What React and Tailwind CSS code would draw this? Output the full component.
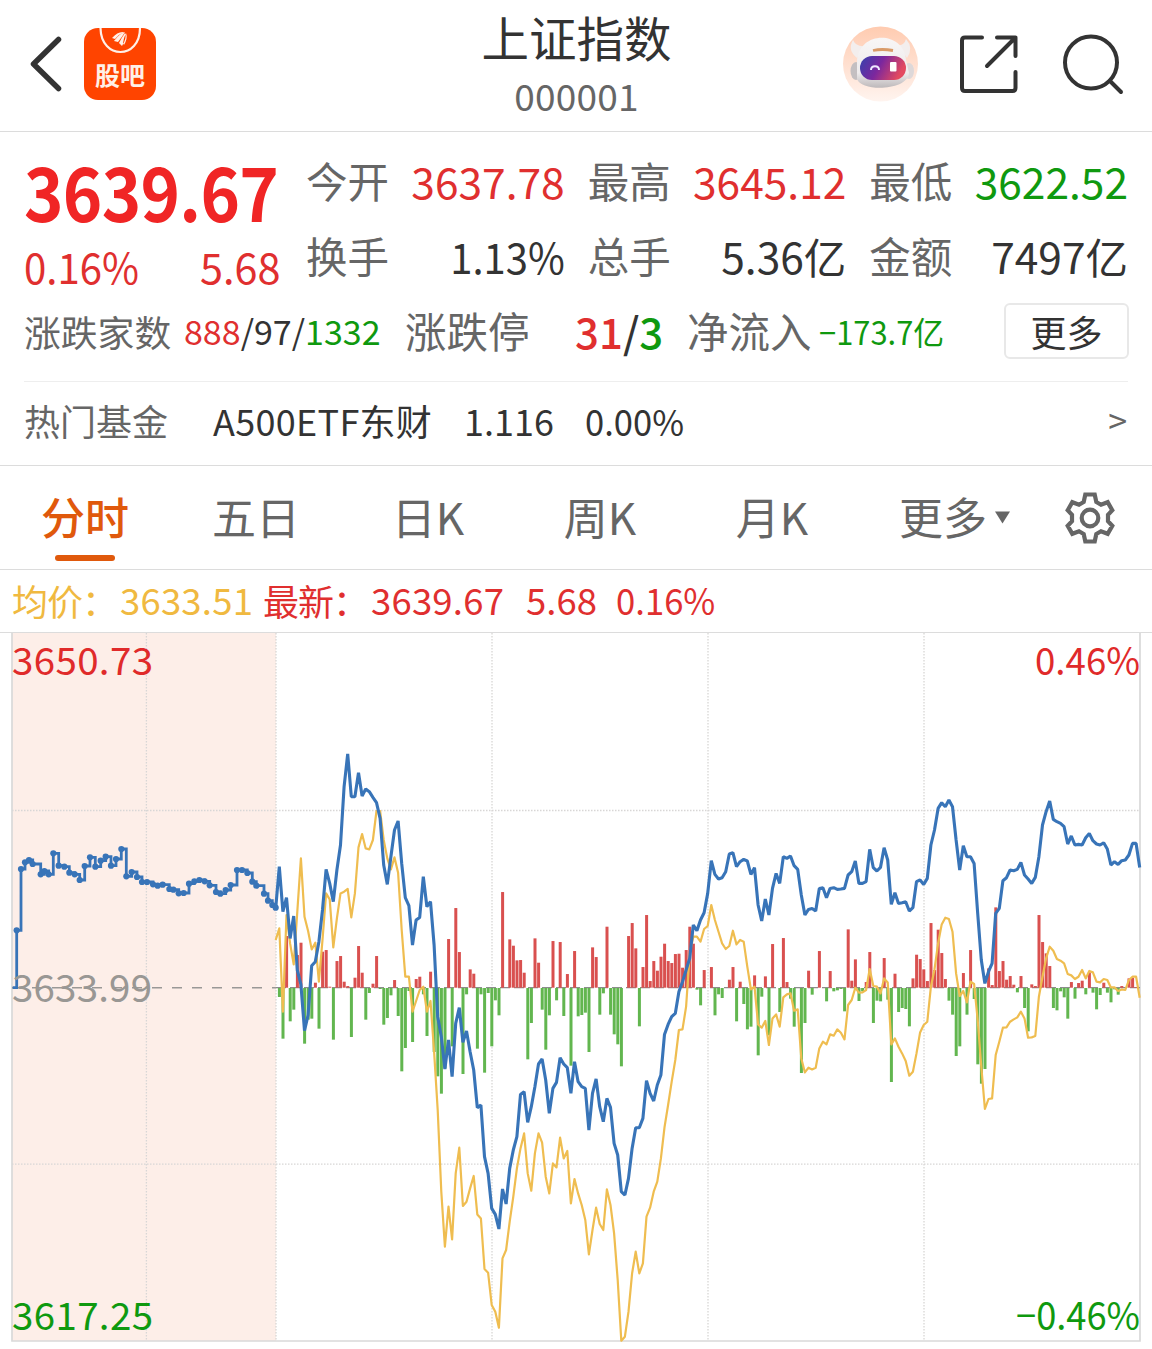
const BASE = 988;
const X0 = 276;
const STEP = 3.6;

// Each part: [origin, values]; three units equal one pixel.
const price = [
  [743, [505,380,515,473,595,528,690,733,872,825,677,665,605,510,388,430,485,390,315,140,42,170,170,98,168,147,155,172,188,235,375,433,350,270,243,370,473,497,615,540,532,410,500]],
  [323, [65,195,410,470,567,480,590,430,383,487,453,515,570,683,675,830,880,985,1003,1047,927,972,865,810,770,643,635,727,680,620,552,537,600,700,625,607,533,552,563,640,545,605,620,625,750,640,597,680,725,655,682,790,825,935,945]],
  [443, [1015,925,863,863,835,722,760,783,735,705,583,553,530,520,455,425,390,355,255,272,240,218,160,62,103,117,113,95,42,38,80,65,58,63,103,83,195,243,177,225,145,100]],
  [623, [310,230,235,228,257,268,345,405,388,385,393,325,323,353,325,323,328,327,325,285,275,243,310,310,305,208,263,273,262,203,240,373,338,370,368,365,393,383,305,300,313,295,195,150,85,68,80,60,80,180,270,197,230,230,250,400,540,610,575,550,400,385,302,293,270,272,268,247,285,297,310,292,230,135,95,63,118,125,130,140,192,168,195,193,195,173,160,182,192,195,188,207,255,245,253,242,240,225,190,190,262]],
];
const average = [
  [743, [600,565,815,525,610,673,515,355,530,573,628,608,725,600,460,478,622,535,460,455,447,532,460,322,282,325,328,300,213,213,300,355,388,352,398,570,710,710,815,783,750,740,815,783]],
  [323, [515,690,935,1100,980,1078,880,803,978,965,925,888,1003,1015,1167,1178,1275,1295,1343,1135,1110,1025,950,865,805,760,880,932,820,760,788,890,940,850,862,773,835,813,970,897,940,975,1020,1123,1050,983,1032,1050,928,975,1060,1200,1382,1370,1295,1180,1115,1180,1150]],
  [443, [1130,1103,1055,1025,955,862,795,725,660,570,568,500,340,290,290,305,267,258,195,240,275,310,327,318,272,313,300,305,380,448,440,553,563,543,615,535,523]],
  [623, [740,652,643,640,692,688,835,877,863,868,863,805,785,793,763,767,748,758,778,675,660,623,638,637,630,567,618,620,640,595,607,793,775,800,820,843,887,875,820,757,735,725,620,568,490,433,413,417,455,580,648,633,667,605,612,720,860,987,957,955,825,785,743,742,725,718,712,695,715,773,772,768,650,590,535,500,512,537,542,550,582,586,597,590,570,595,573,577,605,607,597,600,622,622,633,628,630,600,590,590,653]],
];
const volume = [
  [743, [743,770,895,588,843,808,645,608,910,838,835,728,865,635,630,740,898,663,648,725,738,890,713,618,698,838,758,731,648,746,853,833,765,720,827,993,923,752,905,717,710,762,887,695,935,1008,1060,984,597,918,504,636,1001,762,688,701,925,762,997,758]],
  [323, [498,360,405,36,323,178,197,241,240,278,537,428,175,248,388,508,405,183,360,186,407,282,556,213,408,404,397,515,202,231,403,339,140,403,462,492,558,323,168,129,205,438,261,105,303]],
  [443, [363,392,350,311,363,369,342,341,383,330,260,311,448,495,390,443,381,525,462,473,443,419,381,543,425,491,567,559,406,645,469,409,585,312,443,515,294,426,475,559,443]],
  [623, [878,728,572,643,623,513,623,663,573,633,630,626,693,448,602,538,662,633,606,516,728,661,663,534,658,905,581,695,683,686,738,595,524,537,568,603,429,570,449,519,597,661,703,827,798,579,703,510,656,852,910,866,565,615,382,573,543,599,588,614,636,588,683,753,613,618,405,486,520,558,683,690,633,651,715,606,655,609,602,642,577,637,687,644,608,637,666,627,643,618,623,595,593,621]],
];
const auction = [[38,743],[50,571],[63,387],[75,367],[87,360],[98,372],[122,403],[133,393],[146,403],[160,340],[176,377],[193,380],[208,398],[224,403],[239,420],[254,378],[270,352],[286,380],[302,362],[317,350],[333,377],[348,357],[364,327],[379,409],[395,396],[411,411],[426,426],[441,426],[459,433],[473,437],[488,434],[508,447],[520,449],[536,460],[551,459],[567,431],[583,424],[598,420],[614,424],[629,436],[648,456],[661,461],[677,450],[692,435],[711,390],[726,390],[742,399],[757,425],[769,437],[792,461],[804,482],[817,495],[827,503]].map(([x, y]) => [x / 3, 740 + y / 3]);

const flat = (parts) => parts.flatMap(([o, vs]) => vs.map((v) => (v - o) / 3));
const linePoints = (parts) =>
  flat(parts).map((v, i) => `${(X0 - 0.3 + STEP * i).toFixed(1)},${(BASE + v - 0.3).toFixed(1)}`).join(" ");
const auctionPath = auction.map(([x, y], i) => (i ? `H${x.toFixed(1)}V${y.toFixed(1)}` : `M${x.toFixed(1)} ${y.toFixed(1)}`)).join("");

function Chart() {
  return (
    <svg className="block h-[716px] w-[1152px] overflow-visible" viewBox="0 633 1152 716" fontFamily="'Noto Sans CJK SC', sans-serif" fontSize="38.5">
      <rect x="12" y="633" width="264" height="708" fill="#fdeee8" />
      <g stroke="#d8d6d5" strokeWidth="1.3" strokeDasharray="1.5 1.5">
        <path d="M12 810.5H1140M12 1164.2H1140M146.4 633V1341M276 633V1341M492 633V1341M708 633V1341M924 633V1341" fill="none" />
      </g>
      <path d="M12 633V1341H1140V633" fill="none" stroke="#d9d9d9" strokeWidth="1.7" />
      <path d="M12 987.7H276" stroke="#9a9896" strokeWidth="1.5" strokeDasharray="10 10" />
      <path d="M276 987.7H1140" stroke="#8c8c8c" strokeWidth="1.2" strokeDasharray="10 4" />
      {flat(volume).map((v, i) =>
        v === 0 ? null : (
          <rect key={i} x={X0 + STEP * i - 1.7} y={v < 0 ? BASE + v - 0.3 : BASE} width="3" height={Math.abs(v)} fill={v < 0 ? "#d9504f" : "#62b64f"} />
        )
      )}
      <polyline points={linePoints(average)} fill="none" stroke="#efbd50" strokeWidth="2.2" strokeLinejoin="round" />
      <path d={auctionPath} fill="none" stroke="#3874b8" strokeWidth="2.8" />
      {auction.slice(1).map(([x, y], i) => (
        <circle key={i} cx={x} cy={y} r="3.1" fill="#3874b8" />
      ))}
      <polyline points={linePoints(price)} fill="none" stroke="#3874b8" strokeWidth="3.1" strokeLinejoin="bevel" />
      <text x="12" y="675" textLength="141" fill="#e02a2a">3650.73</text>
      <text x="12" y="1002" textLength="140" fill="#999794">3633.99</text>
      <text x="12" y="1330" textLength="141" fill="#0f990f">3617.25</text>
      <text x="1035" y="675" textLength="105" lengthAdjust="spacingAndGlyphs" fill="#e02a2a">0.46%</text>
      <text x="1016" y="1330" textLength="124" lengthAdjust="spacingAndGlyphs" fill="#0f990f">−0.46%</text>
    </svg>
  );
}

function Stat({ label, value, color }) {
  return (
    <div className="flex h-[75px] items-center justify-between">
      <span className="text-[41.500px] text-[#666]">{label}</span>
      <span className={`text-[42.5px] ${color}`}>{value}</span>
    </div>
  );
}

function Header() {
  return (
    <header className="flex h-[132px] items-center justify-between border-b border-[#dcdcdc] pl-[29px] pr-[28px]">
      <div className="flex w-[360px] items-center gap-[21px] pb-[3px]">
        <svg className="h-[56px] w-[34px]" viewBox="0 0 34 56" fill="none" stroke="#333" strokeWidth="5.5" strokeLinecap="round" strokeLinejoin="round">
          <path d="M29.500 3.500L4.500 28L29.500 52.500" />
        </svg>
        <div className="relative flex h-[72px] w-[72px] justify-center overflow-hidden rounded-[14px] bg-[#ff4400]">
          <svg className="absolute left-0 top-0 h-[30px] w-[72px]" viewBox="0 0 72 30" fill="none">
            <path d="M16.500 0C17 32 56 32 56 0" stroke="#fff0e8" strokeWidth="2.2" />
            <path d="M28 10Q34 3 40 4Q35 6 31 11ZM30 13Q36 5 41 4Q38 9 34 14ZM35 15Q38 9 41 5Q43 10 38 18ZM40 17Q44 10 42 5Q40 9 39 15Z" fill="#fff0e8" />
          </svg>
          <span className="mt-[34px] text-[25px] font-bold leading-[24px] text-[#fff0e8]">股吧</span>
        </div>
      </div>
      <div className="flex flex-col items-center">
        <h1 className="text-[47.500px] leading-[58px] text-[#333]">上证指数</h1>
        <span className="text-[37px] leading-[58px] tracking-[0.200px] text-[#666]">000001</span>
      </div>
      <div className="flex w-[360px] items-center justify-end pb-1">
        <svg className="mr-[40px] h-[76px] w-[76px]" viewBox="0 0 76 76">
          <defs>
            <linearGradient id="halo" x1="0" y1="0" x2="0" y2="1"><stop offset="0" stopColor="#ffcbb0" /><stop offset="1" stopColor="#fff4ef" /></linearGradient>
            <linearGradient id="visor" x1="0" y1="0" x2="1" y2="0.300"><stop offset="0" stopColor="#3542ad" /><stop offset="0.500" stopColor="#7b279e" /><stop offset="1" stopColor="#e34960" /></linearGradient>
            <linearGradient id="shell" x1="0" y1="0" x2="0" y2="1"><stop offset="0" stopColor="#f8f6f6" /><stop offset="0.700" stopColor="#eeebec" /><stop offset="1" stopColor="#bdb8ba" /></linearGradient>
          </defs>
          <circle cx="37.500" cy="38" r="37.500" fill="url(#halo)" />
          <path d="M10 14Q4 24 14 32L22 20Q13 21 10 14ZM63 13Q71 22 64 32L55 19Q61 20 63 13Z" fill="#f3eeed" />
          <ellipse cx="13" cy="45" rx="5.500" ry="9" fill="#c4bfc1" />
          <ellipse cx="66" cy="45" rx="5" ry="8" fill="#ddd8d9" />
          <path d="M14 36C15 4 61 4 63 34L66 47C65 65 18 66 14 53Z" fill="url(#shell)" />
          <rect x="17" y="30" width="46" height="24" rx="12" fill="url(#visor)" />
          <path d="M30 24.500Q39 22.500 50 24.500" fill="none" stroke="#d99a68" strokeWidth="2.800" />
          <path d="M28 44C28 39 36 39 36 44" fill="none" stroke="#eee8ff" strokeWidth="2" />
          <rect x="47" y="36" width="6.500" height="9.500" rx="1" fill="#fff" />
        </svg>
        <svg className="mr-[43px] h-[60px] w-[60px]" viewBox="0 0 60 60" fill="none" stroke="#333" strokeWidth="4" strokeLinecap="round" strokeLinejoin="round">
          <path d="M23 3.500H6Q3 3.500 3 6.500V54Q3 57 6 57H53.500Q56.500 57 56.500 54V38M38 3.500H56.500V22M55.500 4.500L28 32" />
        </svg>
        <svg className="h-[62px] w-[62px]" viewBox="0 0 62 62" fill="none" stroke="#333" strokeWidth="4" strokeLinecap="round">
          <circle cx="29" cy="29.500" r="26" /><path d="M48 48L59 59" />
        </svg>
      </div>
    </header>
  );
}

function Quote() {
  return (
    <section className="h-[334px] border-b border-[#dcdcdc] px-[24px]">
      <div className="flex pt-[11px]">
        <div className="flex h-[150px] w-[257px] flex-col">
          <div className="h-[96px] w-[277px] origin-left scale-x-[0.9] text-[74.500px] font-bold leading-[94px] tracking-[-0.800px] text-[#f02525]">3639.67</div>
          <div className="flex items-center justify-between text-[42.500px] leading-[58px] text-[#e02f2f]">
            <span className="origin-left scale-x-[0.945]">0.16%</span>
            <span className="origin-right scale-x-[0.975]">5.68</span>
          </div>
        </div>
        <div className="ml-[25px] grid grow grid-cols-3 gap-x-[23px]">
          <Stat label="今开" value="3637.78" color="text-[#e02f2f]" />
          <Stat label="最高" value="3645.12" color="text-[#e02f2f]" />
          <Stat label="最低" value="3622.52" color="text-[#0f990f]" />
          <Stat label="换手" value="1.13%" color="text-[#333] origin-right scale-x-[0.94]" />
          <Stat label="总手" value="5.36亿" color="text-[#333]" />
          <Stat label="金额" value="7497亿" color="text-[#333]" />
        </div>
      </div>
      <div className="flex h-[75px] items-center text-[#666]">
        <span className="w-[160px] pt-[2px] text-[36.800px]">涨跌家数</span>
        <span className="w-[221px] text-[34px] text-[#333]"><b className="font-normal text-[#e02f2f]">888</b>/97/<b className="font-normal text-[#0f990f]">1332</b></span>
        <span className="w-[170px] text-[41.500px]">涨跌停</span>
        <span className="w-[112px] text-[42px] font-medium text-[#333]"><b className="font-medium text-[#e02f2f]">31</b>/<b className="font-medium text-[#0f990f]">3</b></span>
        <span className="w-[132px] text-[41.500px]">净流入</span>
        <span className="origin-left scale-x-[0.965] text-[32px] text-[#0f990f]">−173.7亿</span>
        <button className="ml-auto mr-[-1px] h-[56px] w-[125px] rounded-[6px] border-2 border-[#e8e8e8] text-[36px] leading-[46px] text-[#333]">更多</button>
      </div>
      <div className="mt-[13px] flex h-[82px] items-center border-t border-[#eee] pb-[6px] text-[36px] text-[#333]">
        <span className="w-[189px] text-[#666]">热门基金</span>
        <span className="w-[251px] tracking-[0.300px]">A500ETF东财</span>
        <span className="w-[121px]">1.116</span>
        <span className="origin-left scale-x-[0.96]">0.00%</span>
        <span className="ml-auto mr-[1px] text-[34px] text-[#666]">&gt;</span>
      </div>
    </section>
  );
}

function Tabs() {
  return (
    <nav className="flex h-[104px] border-b border-[#dcdcdc] text-[44px] leading-[101px] text-[#666]">
      <div className="flex w-[170px] flex-col items-center text-[#e0590c]">
        <span className="h-[89px] font-medium">分时</span>
        <i className="h-[6px] w-[60px] rounded-full bg-[#e0590c]" />
      </div>
      {["五日", "日K", "周K", "月K"].map((t) => <span key={t} className="w-[172px] text-center">{t}</span>)}
      <span className="ml-[41px] w-[96px]">更多</span>
      <svg className="mt-[45px] h-[13px] w-[15px]" viewBox="0 0 16 13" fill="#666"><path d="M0 0H16L8 13Z" /></svg>
      <svg className="ml-[53px] mt-[25px] h-[54px] w-[54px]" viewBox="0 0 54 54" fill="none" stroke="#666" strokeWidth="4.2">
        <path d="M22.300 3.500H31.700L33.300 11L38 13.700L44.700 11.200L49.300 19.300L45 23.800V30.200L49.300 34.700L44.700 42.800L38 40.300L33.300 43L31.700 50.500H22.300L20.700 43L16 40.300L9.300 42.800L4.700 34.700L9 30.200V23.800L4.700 19.300L9.300 11.200L16 13.700L20.700 11Z" />
        <circle cx="27" cy="27" r="8.300" />
      </svg>
    </nav>
  );
}

export default function App() {
  return (
    <main className="h-[1349px] w-[1152px] overflow-hidden whitespace-nowrap bg-white font-['Noto_Sans_CJK_SC',sans-serif]">
      <Header />
      <Quote />
      <Tabs />
      <div className="flex h-[63px] items-center border-b border-[#dcdcdc] pb-[2px] pl-[12px] text-[36px] text-[#e02f2f]">
        <span className="w-[108px] tracking-[-1px] text-[#f0b940]">均价：</span>
        <span className="w-[143px] text-[36.500px] tracking-[0.200px] text-[#f0b940]">3633.51</span>
        <span className="w-[108px] tracking-[-1px]">最新：</span>
        <span className="w-[155px] text-[36.500px] tracking-[0.200px]">3639.67</span>
        <span className="w-[90px] text-[36.500px]">5.68</span>
        <span className="origin-left scale-x-[0.95] text-[36.500px]">0.16%</span>
      </div>
      <Chart />
    </main>
  );
}
